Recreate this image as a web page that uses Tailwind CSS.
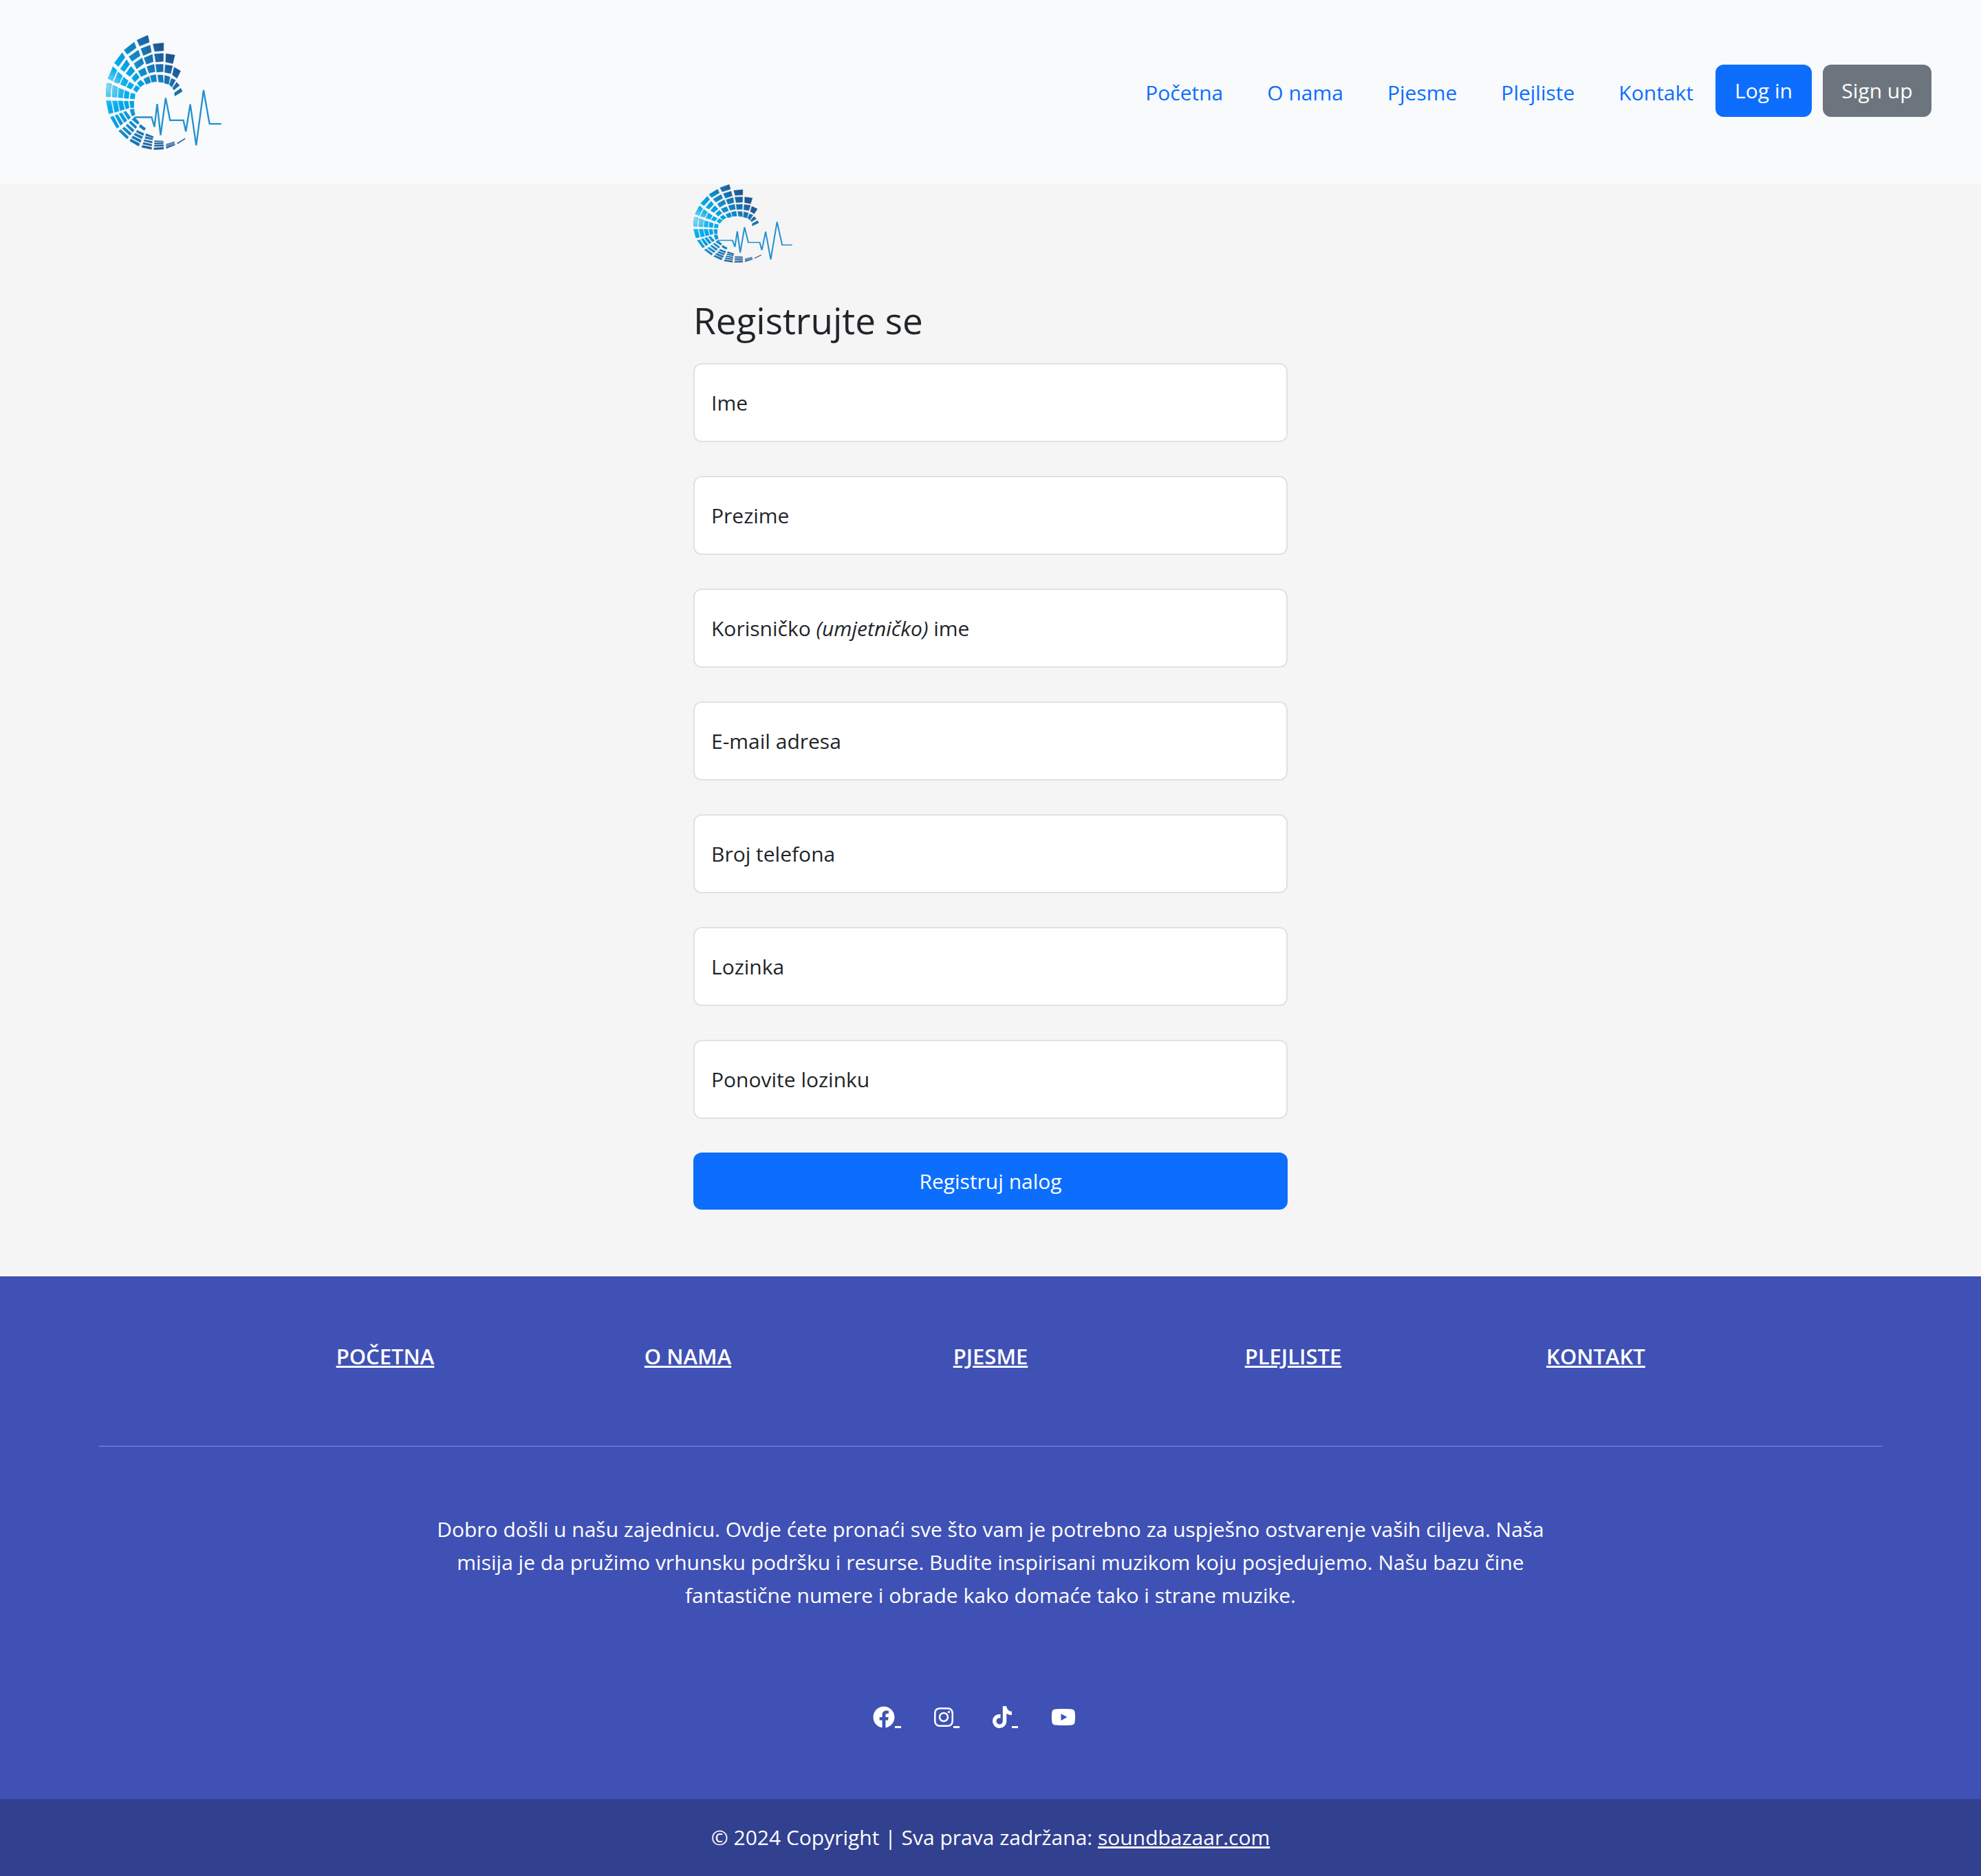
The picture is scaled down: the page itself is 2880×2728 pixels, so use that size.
<!DOCTYPE html>
<html lang="bs">
<head>
<meta charset="utf-8">
<meta name="viewport" content="width=device-width, initial-scale=1">
<title>Sound Bazaar – Registracija</title>
<script src="https://cdn.jsdelivr.net/npm/@tailwindcss/browser@4"></script>
</head>
<body class="flex min-h-screen flex-col bg-[#f5f5f5] font-['Open_Sans','Noto_Sans',sans-serif] text-[30px] leading-[48px] text-[#212529]">

<!-- Logo shared by the header and the form -->
<svg class="absolute h-0 w-0" aria-hidden="true">
  <defs>
    <linearGradient id="blues" gradientUnits="userSpaceOnUse" x1="60" y1="280" x2="300" y2="100">
      <stop offset="0" stop-color="#00aeef"/><stop offset=".36" stop-color="#00a8ea"/><stop offset=".58" stop-color="#0f8ac9"/><stop offset=".8" stop-color="#1a6eac"/><stop offset="1" stop-color="#1e5590"/>
    </linearGradient>
    <linearGradient id="lower" gradientUnits="userSpaceOnUse" x1="80" y1="340" x2="260" y2="520">
      <stop offset="0" stop-color="#00aeef"/><stop offset=".3" stop-color="#0d96d8"/><stop offset=".65" stop-color="#1b76b2"/><stop offset="1" stop-color="#1e5c98"/>
    </linearGradient>
    <radialGradient id="shine" gradientUnits="userSpaceOnUse" cx="43" cy="255" r="105">
      <stop offset="0" stop-color="#8ddcec"/><stop offset=".5" stop-color="#62cdee" stop-opacity=".7"/><stop offset="1" stop-color="#00aeef" stop-opacity="0"/>
    </radialGradient>
    <path id="top-blocks" d="M176 53 223 32 230 62 188 79ZM193 90 233 75 239 105 204 120ZM207 130 243 115 247 147 217 158ZM219 168 250 158 255 190 228 196ZM234 208 258 203 262 233 240 236Z
      M120 96 164 62 173 86 134 115ZM141 125 182 96 190 121 155 145ZM163 155 198 130 206 155 175 178ZM182 187 210 173 220 200 194 212ZM205 222 228 210 236 237 216 245Z
      M78 152 112 107 124 128 95 168ZM104 178 131 138 144 158 121 190ZM128 198 150 167 167 187 145 211ZM153 218 173 196 187 215 167 235ZM177 240 192 226 209 243 190 257Z
      M50 220 72 168 89 185 70 230ZM76 235 94 191 113 208 98 241ZM104 245 118 213 138 230 126 254ZM131 257 144 235 163 248 151 266ZM160 268 172 249 189 261 175 280Z
      M42 298Q41 268 46 240L66 244Q60 270 61 299ZM68 300 71 249 92 258 88 301ZM94 302 97 262 118 269 114 304ZM120 305 123 271 143 280 139 307ZM146 307 150 283 168 287 166 309Z
      M246 70 292 65 292 99 253 102ZM252 113 291 111 291 145 258 148ZM258 159 290 158 290 190 262 192ZM266 204 289 205 291 237 271 235Z
      M302 112 341 118 332 155 301 148ZM299 160 331 165 323 198 297 193ZM297 206 320 213 314 245 295 240Z
      M338 171 366 187 350 219 330 204ZM326 219 344 227 328 257 317 247ZM349 236 361 250 337 270 331 261ZM367 262 373 276 341 296 339 282Z"/>
    <path id="low-blocks" d="M42 316 63 316 73 368 54 373ZM69 317 90 317 98 361 79 367ZM94 317 114 317 122 354 103 360ZM119 318 138 318 142 348 127 353ZM144 318 163 318 163 346 148 347Z
      M60 388 74 383 99 430 88 436ZM80 380 92 376 116 414 104 424ZM98 373 110 368 133 402 121 411ZM117 366 128 361 149 389 138 399ZM145 355 162 351 168 377 154 384Z
      M96 448 106 441 140 473 133 483ZM112 437 121 430 153 458 145 467ZM127 424 135 417 165 444 157 453ZM141 411 149 404 176 429 170 438ZM154 398 165 387 186 410 180 420Z
      M150 482 188 502 184 514 144 491ZM158 469 195 487 191 498 153 478ZM168 457 201 472 197 482 163 465ZM176 444 207 458 203 468 173 453ZM190 418 214 436 208 446 186 431Z
      M200 510 240 518 240 528 196 519ZM204 497 241 505 241 513 202 505ZM208 485 243 493 242 500 206 492ZM212 472 245 480 244 487 211 480ZM216 459 248 472 246 478 213 468Z
      M250 521 292 518 292 527 250 529ZM252 509 292 507 292 514 251 515ZM252 499 291 497 291 503 252 505ZM252 490 291 491 291 494 252 495Z
      M303 518 341 505 342 509 304 524ZM303 511 339 500 340 503 304 515ZM303 505 339 494 340 497 303 508ZM351 500 385 479 386 483 353 504Z"/>
    <symbol id="logo" viewBox="41 31 503 499" preserveAspectRatio="none">
      <use href="#top-blocks" fill="url(#blues)" stroke="url(#blues)" stroke-width="1.5"/><use href="#low-blocks" fill="url(#lower)" stroke="url(#lower)" stroke-width="1"/>
      <use href="#top-blocks" fill="url(#shine)"/><use href="#low-blocks" fill="url(#shine)"/>
      <path fill="none" stroke="#2391cf" stroke-width="7" stroke-linejoin="miter" stroke-miterlimit="3" d="M166 388H240L252 430 264 330 279 466 301 304 320 401H378L389 450 408 332 434 510 466 270 492 417H543"/>
    </symbol>
  </defs>
</svg>

<header class="flex h-[268px] items-center justify-between bg-[#f8fafc] pr-[72px] pl-[154px]">
  <a href="#" aria-label="Početna stranica"><svg class="h-[167px] w-[168px]"><use href="#logo"/></svg></a>
  <div class="flex items-center pb-1">
    <nav class="flex gap-16 px-8 pt-1.5 text-[#0d6efd]">
      <a href="#">Početna</a><a href="#">O nama</a><a href="#">Pjesme</a><a href="#">Plejliste</a><a href="#">Kontakt</a>
    </nav>
    <div class="flex gap-4 text-white">
      <button type="button" class="h-[76px] w-[140px] rounded-xl bg-[#0d6efd]">Log in</button>
      <button type="button" class="h-[76px] w-[158px] rounded-xl bg-[#6c757d]">Sign up</button>
    </div>
  </div>
</header>

<main class="flex-1 pb-24">
  <form class="mx-auto w-[30%]">
    <svg class="h-[114px] w-[144px]" role="img" aria-label="Logo"><use href="#logo"/></svg>
    <h1 class="mt-11 mb-[22px] text-[53px] leading-[80px]">Registrujte se</h1>
    <div class="flex flex-col gap-[49px]">
      <div class="flex h-[115px] items-center gap-4 rounded-xl border-2 border-[#dee2e6] bg-white px-6">
        <label for="ime">Ime</label><input id="ime" type="text" class="min-w-0 flex-1 outline-none">
      </div>
      <div class="flex h-[115px] items-center gap-4 rounded-xl border-2 border-[#dee2e6] bg-white px-6">
        <label for="prezime">Prezime</label><input id="prezime" type="text" class="min-w-0 flex-1 outline-none">
      </div>
      <div class="flex h-[115px] items-center gap-4 rounded-xl border-2 border-[#dee2e6] bg-white px-6">
        <label for="korisnik">Korisničko <em>(umjetničko)</em> ime</label><input id="korisnik" type="text" class="min-w-0 flex-1 outline-none">
      </div>
      <div class="flex h-[115px] items-center gap-4 rounded-xl border-2 border-[#dee2e6] bg-white px-6">
        <label for="email">E-mail adresa</label><input id="email" type="email" class="min-w-0 flex-1 outline-none">
      </div>
      <div class="flex h-[115px] items-center gap-4 rounded-xl border-2 border-[#dee2e6] bg-white px-6">
        <label for="telefon">Broj telefona</label><input id="telefon" type="tel" class="min-w-0 flex-1 outline-none">
      </div>
      <div class="flex h-[115px] items-center gap-4 rounded-xl border-2 border-[#dee2e6] bg-white px-6">
        <label for="lozinka">Lozinka</label><input id="lozinka" type="password" class="min-w-0 flex-1 outline-none">
      </div>
      <div class="flex h-[115px] items-center gap-4 rounded-xl border-2 border-[#dee2e6] bg-white px-6">
        <label for="ponovo">Ponovite lozinku</label><input id="ponovo" type="password" class="min-w-0 flex-1 outline-none">
      </div>
      <button type="submit" class="h-[83px] rounded-xl bg-[#0d6efd] text-white">Registruj nalog</button>
    </div>
  </form>
</main>

<footer class="bg-[#3f51b5] text-center text-white">
  <div class="px-[5%]">
    <nav class="-mx-6 flex justify-center pt-[92px] text-[31px] font-semibold uppercase underline">
      <div class="w-1/6"><a href="#">Početna</a></div>
      <div class="w-1/6"><a href="#">O nama</a></div>
      <div class="w-1/6"><a href="#">Pjesme</a></div>
      <div class="w-1/6"><a href="#">Plejliste</a></div>
      <div class="w-1/6"><a href="#">Kontakt</a></div>
    </nav>
    <hr class="mt-[106px] border-t-2 border-[#6674c4]">
    <p class="mx-auto mt-24 w-2/3 px-6">Dobro došli u našu zajednicu. Ovdje ćete pronaći sve što vam je potrebno za uspješno ostvarenje vaših ciljeva. Naša misija je da pružimo vrhunsku podršku i resurse. Budite inspirisani muzikom koju posjedujemo. Našu bazu čine fantastične numere i obrade kako domaće tako i strane muzike.</p>
    <div class="mt-[137px] flex justify-center pb-[103px]">
      <a href="#" aria-label="Facebook" class="mr-12 flex items-end"><svg class="h-8 w-8 fill-white" viewBox="0 0 512 512"><path d="M504 256C504 119 393 8 256 8S8 119 8 256c0 123.78 90.69 226.38 209.25 245V327.69h-63V256h63v-54.64c0-62.15 37-96.48 93.67-96.48 27.14 0 55.52 4.84 55.52 4.84v61h-31.28c-30.8 0-40.41 19.12-40.41 38.73V256h68.78l-11 71.69h-57.78V501C413.31 482.38 504 379.78 504 256z"/></svg><span class="h-[3px] w-[9px] bg-white"></span></a>
      <a href="#" aria-label="Instagram" class="mr-12 flex items-end"><svg class="h-8 w-7 fill-white" viewBox="0 0 448 512"><path d="M224.1 141c-63.6 0-114.9 51.3-114.9 114.9s51.3 114.9 114.9 114.9S339 319.5 339 255.9 287.7 141 224.1 141zm0 189.6c-41.1 0-74.7-33.5-74.7-74.7s33.5-74.7 74.7-74.7 74.7 33.5 74.7 74.7-33.6 74.7-74.7 74.7zm146.4-194.3c0 14.9-12 26.8-26.8 26.8-14.9 0-26.8-12-26.8-26.8s12-26.8 26.8-26.8 26.8 12 26.8 26.8zm76.1 27.2c-1.7-35.9-9.9-67.7-36.2-93.9-26.2-26.2-58-34.4-93.9-36.2-37-2.1-147.9-2.1-184.9 0-35.8 1.7-67.6 9.9-93.9 36.1s-34.4 58-36.2 93.9c-2.1 37-2.1 147.9 0 184.9 1.7 35.9 9.9 67.7 36.2 93.9s58 34.4 93.9 36.2c37 2.1 147.9 2.1 184.9 0 35.9-1.7 67.7-9.9 93.9-36.2 26.2-26.2 34.4-58 36.2-93.9 2.1-37 2.1-147.8 0-184.8zM398.8 388c-7.8 19.6-22.9 34.7-42.6 42.6-29.5 11.7-99.5 9-132.1 9s-102.7 2.6-132.1-9c-19.6-7.8-34.7-22.9-42.6-42.6-11.7-29.5-9-99.5-9-132.1s-2.6-102.7 9-132.1c7.8-19.6 22.9-34.7 42.6-42.6 29.5-11.7 99.5-9 132.1-9s102.7-2.6 132.1 9c19.6 7.8 34.7 22.9 42.6 42.6 11.7 29.5 9 99.5 9 132.1s2.7 102.7-9 132.1z"/></svg><span class="h-[3px] w-[9px] bg-white"></span></a>
      <a href="#" aria-label="TikTok" class="mr-12 flex items-end"><svg class="h-8 w-7 fill-white" viewBox="0 0 448 512"><path d="M448,209.91a210.06,210.06,0,0,1-122.77-39.25V349.38A162.55,162.55,0,1,1,185,188.31V278.2a74.62,74.62,0,1,0,52.23,71.18V0l88,0a121.18,121.18,0,0,0,1.86,22.17h0A122.18,122.18,0,0,0,381,102.39a121.43,121.43,0,0,0,67,20.14Z"/></svg><span class="h-[3px] w-[9px] bg-white"></span></a>
      <a href="#" aria-label="YouTube" class="mr-12 flex items-end"><svg class="h-8 w-9 fill-white" viewBox="0 0 576 512"><path d="M549.655 124.083c-6.281-23.65-24.787-42.276-48.284-48.597C458.781 64 288 64 288 64S117.22 64 74.629 75.486c-23.497 6.322-42.003 24.947-48.284 48.597-11.412 42.867-11.412 132.305-11.412 132.305s0 89.438 11.412 132.305c6.281 23.65 24.787 41.5 48.284 47.821C117.22 448 288 448 288 448s170.78 0 213.371-11.486c23.497-6.321 42.003-24.171 48.284-47.821 11.412-42.867 11.412-132.305 11.412-132.305s0-89.438-11.412-132.305zm-317.51 213.508V175.185l142.739 81.205-142.739 81.201z"/></svg></a>
    </div>
  </div>
  <div class="bg-black/20 py-8">© 2024 Copyright | Sva prava zadržana: <a href="#" class="underline">soundbazaar.com</a></div>
</footer>
</body>
</html>
